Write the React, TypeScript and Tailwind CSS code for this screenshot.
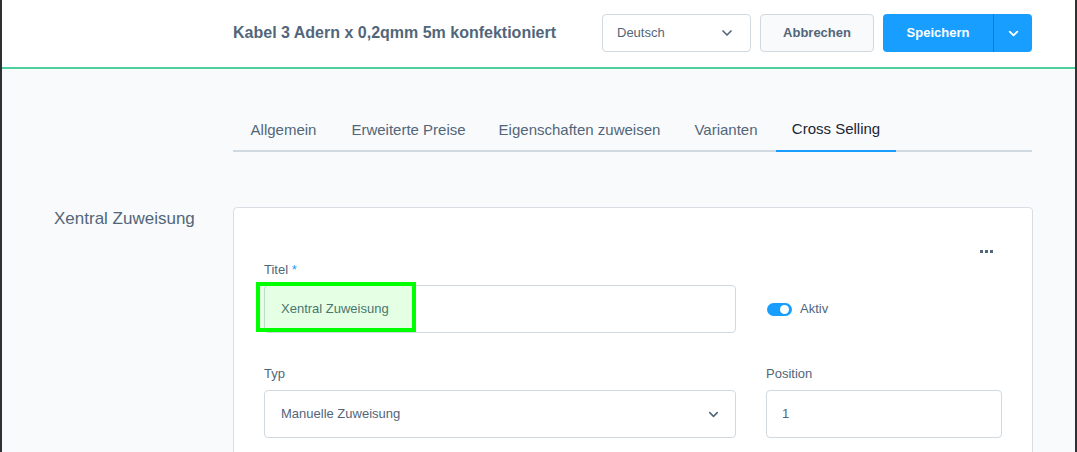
import { ChevronDown } from "lucide-react";

const TABS = [
  { label: "Allgemein", w: "w-[101px]" },
  { label: "Erweiterte Preise", w: "w-[149px]" },
  { label: "Eigenschaften zuweisen", w: "w-[193px]" },
  { label: "Varianten", w: "w-[100px]" },
  { label: "Cross Selling", w: "w-[120px]" },
];

export default function App() {
  return (
    <div className="flex h-[452px] w-full overflow-hidden bg-[#f9fafb] font-['Liberation_Sans',Arial,sans-serif] text-[#52667a]">
      <div className="w-[2px] shrink-0 bg-[#2f3033]" />
      <div className="flex min-w-0 flex-1 flex-col">
        {/* header */}
        <div className="flex h-[69px] shrink-0 items-center border-b-2 border-[#4fcf9c] bg-white pb-[2px] pl-[231px] pr-[43px]">
          <h1 className="flex-1 text-[16px] font-bold">Kabel 3 Adern x 0,2qmm 5m konfektioniert</h1>
          <div className="flex items-center gap-[9px]">
            <div className="flex h-[38px] w-[149px] items-center justify-between rounded-[4px] border border-[#d1d9e0] bg-white pl-[14px] pr-[15px] text-[13px]">
              <span>Deutsch</span>
              <ChevronDown size={16} strokeWidth={2.5} />
            </div>
            <button className="h-[38px] w-[114px] rounded-[4px] border border-[#d1d9e0] bg-[#f9fafb] text-[13px] font-bold text-[#52667a]">
              Abbrechen
            </button>
            <div className="flex h-[38px] w-[149px] overflow-hidden rounded-[4px] bg-[#189eff] text-white">
              <button className="w-[110px] text-[13px] font-bold">Speichern</button>
              <div className="w-px bg-[#0b7ed9]" />
              <div className="flex flex-1 items-center justify-center pt-[2px]">
                <ChevronDown size={15} strokeWidth={3} />
              </div>
            </div>
          </div>
        </div>

        {/* body */}
        <div className="flex flex-1 flex-col pr-[43px] pt-[41px]">
          <div className="ml-[231px] flex border-b-2 border-[#d1d9e0]">
            {TABS.map((t) => (
              <div
                key={t.label}
                className={
                  t.label === "Cross Selling"
                    ? `-mb-[2px] flex h-[42px] items-center justify-center border-b-2 border-[#189eff] pb-[2px] text-[15px] text-[#1a2632] ${t.w}`
                    : `flex h-[40px] items-center justify-center text-[15px] ${t.w}`
                }
              >
                {t.label}
              </div>
            ))}
          </div>

          <div className="mt-[55px] flex">
            <div className="w-[231px] shrink-0 pl-[52px] pt-[1px] text-[17px] leading-[22px]">Xentral Zuweisung</div>
            <div className="flex-1 rounded-[4px] border border-[#d9dee5] bg-white px-[30px] pb-[40px] pt-[33px]">
              <div className="flex h-[20px] items-center justify-end gap-[2px] pr-[9px]">
                <span className="h-[3px] w-[3px] bg-[#52667a]" />
                <span className="h-[3px] w-[3px] bg-[#52667a]" />
                <span className="h-[3px] w-[3px] bg-[#52667a]" />
              </div>
              <div className="grid grid-cols-[472px_236px] gap-x-[30px] gap-y-[32px]">
                <div>
                  <div className="mb-[6px] h-[18px] text-[13px] leading-[18px]">
                    Titel <span className="text-[#189eff]">*</span>
                  </div>
                  <div className="relative flex h-[48px] items-center rounded-[4px] border border-[#d1d9e0] bg-white pl-[16px] text-[13px]">
                    Xentral Zuweisung
                    <div className="absolute left-[-9px] top-[-4px] h-[50px] w-[160px] border-4 border-[#00ff00] bg-[#00ff00]/10" />
                  </div>
                </div>
                <div className="pt-[24px]">
                  <div className="flex h-[48px] items-center gap-[8px] pl-[1px] text-[13px]">
                    <div className="flex h-[13px] w-[25px] items-center justify-end rounded-full bg-[#189eff] pr-[3px]">
                      <span className="h-[9px] w-[9px] rounded-full bg-white" />
                    </div>
                    Aktiv
                  </div>
                </div>
                <div>
                  <div className="mb-[7px] h-[18px] text-[13px] leading-[18px]">Typ</div>
                  <div className="flex h-[48px] items-center justify-between rounded-[4px] border border-[#d1d9e0] bg-white pl-[16px] pr-[14px] text-[13px]">
                    <span>Manuelle Zuweisung</span>
                    <ChevronDown size={15} strokeWidth={2.5} />
                  </div>
                </div>
                <div>
                  <div className="mb-[7px] h-[18px] text-[13px] leading-[18px]">Position</div>
                  <div className="flex h-[48px] items-center rounded-[4px] border border-[#d1d9e0] bg-white pl-[15px] text-[13px]">
                    1
                  </div>
                </div>
              </div>
            </div>
          </div>
        </div>
      </div>
      <div className="w-[2px] shrink-0 bg-[#2f3033]" />
    </div>
  );
}
